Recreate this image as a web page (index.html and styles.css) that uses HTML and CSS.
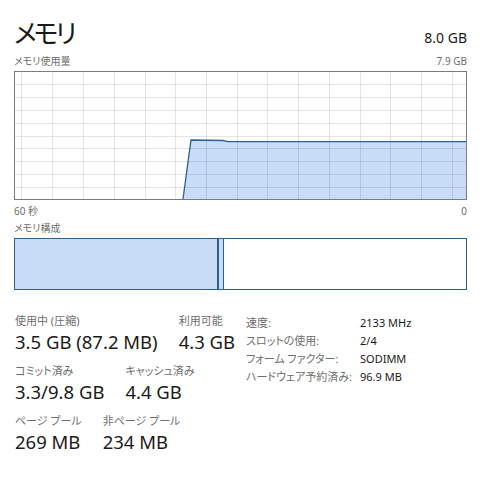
FILE: index.html
```html
<!DOCTYPE html>
<html lang="ja">
<head>
    <meta charset="UTF-8">
    <title>メモリ</title>
    <link rel="stylesheet" href="styles.css">
</head>
<body>
<section class="page">
    <div class="head">
        <h1 class="title">メモリ</h1>
        <span class="total">8.0 GB</span>
    </div>
    <div class="cap usage">
        <span>メモリ使用量</span>
        <span>7.9 GB</span>
    </div>
    <div class="chart">
        <svg width="451" height="127" viewBox="0 0 451 127">
            <polygon class="area" points="168,127 176,68 208,68.5 213,69.7 451,69.7 451,127" />
            <g class="grid">
                <line x1="6.5" y1="0" x2="6.5" y2="127" />
                <line x1="37.5" y1="0" x2="37.5" y2="127" />
                <line x1="68.5" y1="0" x2="68.5" y2="127" />
                <line x1="99.5" y1="0" x2="99.5" y2="127" />
                <line x1="130.5" y1="0" x2="130.5" y2="127" />
                <line x1="160.5" y1="0" x2="160.5" y2="127" />
                <line x1="191.5" y1="0" x2="191.5" y2="127" />
                <line x1="222.5" y1="0" x2="222.5" y2="127" />
                <line x1="252.5" y1="0" x2="252.5" y2="127" />
                <line x1="283.5" y1="0" x2="283.5" y2="127" />
                <line x1="314.5" y1="0" x2="314.5" y2="127" />
                <line x1="345.5" y1="0" x2="345.5" y2="127" />
                <line x1="375.5" y1="0" x2="375.5" y2="127" />
                <line x1="406.5" y1="0" x2="406.5" y2="127" />
                <line x1="437.5" y1="0" x2="437.5" y2="127" />
                <line x1="0" y1="12.5" x2="451" y2="12.5" />
                <line x1="0" y1="25.5" x2="451" y2="25.5" />
                <line x1="0" y1="38.5" x2="451" y2="38.5" />
                <line x1="0" y1="51.5" x2="451" y2="51.5" />
                <line x1="0" y1="64.5" x2="451" y2="64.5" />
                <line x1="0" y1="76.5" x2="451" y2="76.5" />
                <line x1="0" y1="89.5" x2="451" y2="89.5" />
                <line x1="0" y1="102.5" x2="451" y2="102.5" />
                <line x1="0" y1="115.5" x2="451" y2="115.5" />
            </g>
            <polyline class="edge" points="168,127 176,68 208,68.5 213,69.7 451,69.7" />
        </svg>
    </div>
    <div class="cap axis">
        <span>60 秒</span>
        <span>0</span>
    </div>
    <div class="cap">
        <span>メモリ構成</span>
    </div>
    <div class="comp">
        <div class="seg used"></div>
        <div class="seg mod"></div>
        <div class="seg free"></div>
    </div>
    <div class="stats">
        <div class="main">
            <div class="row">
                <div class="stat">
                    <div class="lbl">使用中 (圧縮)</div>
                    <div class="val">3.5 GB (87.2 MB)</div>
                </div>
                <div class="stat">
                    <div class="lbl">利用可能</div>
                    <div class="val">4.3 GB</div>
                </div>
            </div>
            <div class="row">
                <div class="stat">
                    <div class="lbl">コミット済み</div>
                    <div class="val">3.3/9.8 GB</div>
                </div>
                <div class="stat">
                    <div class="lbl">キャッシュ済み</div>
                    <div class="val">4.4 GB</div>
                </div>
            </div>
            <div class="row">
                <div class="stat">
                    <div class="lbl">ページ プール</div>
                    <div class="val">269 MB</div>
                </div>
                <div class="stat">
                    <div class="lbl">非ページ プール</div>
                    <div class="val">234 MB</div>
                </div>
            </div>
        </div>
        <dl class="info">
            <dt>速度:</dt>
            <dd>2133 MHz</dd>
            <dt>スロットの使用:</dt>
            <dd>2/4</dd>
            <dt>フォーム ファクター:</dt>
            <dd>SODIMM</dd>
            <dt>ハードウェア予約済み:</dt>
            <dd>96.9 MB</dd>
        </dl>
    </div>
</section>
</body>
</html>
```

FILE: styles.css
```css
body {
    margin: 0;
    background: #fff;
    color: #1a1a1a;
    font-family: "Noto Sans", "Noto Sans CJK JP", sans-serif;
    font-feature-settings: "palt";
}
.page {
    padding: 14px 24px 0 14px;
}
.head {
    display: flex;
    justify-content: space-between;
    align-items: baseline;
}
.title {
    margin: 0;
    font-size: 26px;
    line-height: 36px;
    letter-spacing: -3px;
    font-weight: normal;
    font-family: "Noto Sans CJK JP", sans-serif;
}
.total {
    font-size: 14px;
}
.cap {
    display: flex;
    justify-content: space-between;
    margin-top: 2px;
    font-size: 10px;
    line-height: 15px;
    color: #6e6e6e;
}
.usage {
    margin-top: 4px;
    margin-bottom: 2px;
}
.chart {
    height: 127px;
    border: 1px solid #7c7c7c;
}
.chart svg {
    display: block;
}
.area {
    fill: #c9ddf9;
}
.grid line {
    stroke: rgba(0, 0, 0, 0.1);
    stroke-width: 1;
}
.edge {
    fill: none;
    stroke: #2b5f96;
    stroke-width: 1.3;
}
.axis {
    margin-top: 4px;
}
.comp {
    display: flex;
    height: 52px;
    margin-top: 2px;
}
.seg {
    border: 1px solid #2b5f8e;
}
.used {
    width: 202px;
    background: #c9ddf9;
}
.mod {
    width: 4px;
    background: #c9ddf9;
}
.free {
    flex: 1;
    border-left: none;
}
.stats {
    display: flex;
    margin-top: 23px;
    padding-left: 1px;
}
.main {
    width: 231px;
}
.row {
    display: flex;
    gap: 21px;
    margin-bottom: 8px;
}
.lbl {
    font-size: 11px;
    line-height: 16px;
    color: #6e6e6e;
}
.val {
    font-size: 18.5px;
    line-height: 26px;
}
.info {
    display: grid;
    grid-template-columns: 114px auto;
    grid-auto-rows: 18px;
    align-content: start;
    margin: 1px 0 0;
    font-size: 11px;
    line-height: 18px;
}
.info dt {
    color: #6e6e6e;
}
.info dd {
    margin: 0;
    color: #1a1a1a;
}
```
